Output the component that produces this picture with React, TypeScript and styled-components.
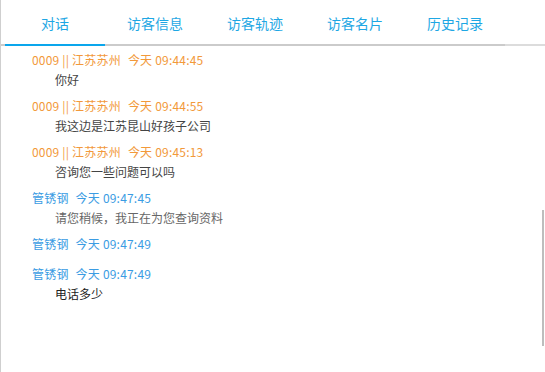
import React from "react";
import styled, { createGlobalStyle } from "styled-components";

const GlobalStyle = createGlobalStyle`
    html, body {
        margin: 0;
        padding: 0;
        background: #fff;
    }
    body {
        font-family: "Noto Sans CJK SC", "Noto Sans", sans-serif;
    }
`

const Wrapper = styled.div`
    position: relative;
    width: 545px;
    height: 372px;
    box-sizing: border-box;
    border-left: 1px solid #cfcfcf;
    overflow: hidden;
`

const TabBar = styled.div`
    display: flex;
    height: 46px;
    box-sizing: border-box;
    border-bottom: 2px solid #dcdcdc;
    margin-left: -1px;
`

const TabTrack = styled.div`
    display: flex;
    width: 505px;
    padding-left: 5px;
    box-sizing: border-box;
    margin-bottom: -2px;
    border-bottom: 2px solid #cbcbcb;
`

const Tab = styled.div<{ $active?: boolean }>`
    width: 100px;
    display: flex;
    align-items: center;
    justify-content: center;
    padding-top: 2px;
    font-size: 14px;
    color: #1ea7e4;
    margin-bottom: -2px;
    border-bottom: 2px solid ${(p) => (p.$active ? "#0aa6ec" : "transparent")};
`

const ChatList = styled.div`
    display: flex;
    flex-direction: column;
    padding: 4px 0 0 31px;
`

const Message = styled.div`
    display: flex;
    flex-direction: column;
    margin-bottom: 6px;
`

const Header = styled.div<{ $guest?: boolean }>`
    display: flex;
    gap: 7px;
    height: 20px;
    line-height: 20px;
    font-size: 12px;
    letter-spacing: 0.2px;
    color: ${(p) => (p.$guest ? "#f2993a" : "#3a9ce3")};
    white-space: pre;
`

const Content = styled.div<{ $tone?: string }>`
    min-height: 4px;
    line-height: 20px;
    padding-left: 23px;
    font-size: 12px;
    color: ${(p) => p.$tone || "#444"};
`

const ScrollThumb = styled.div`
    position: absolute;
    right: 1px;
    top: 210px;
    width: 2px;
    height: 136px;
    background: #bdbdbd;
`

type Msg = { who: string; time: string; text: string; guest?: boolean; tone?: string };

const messages: Msg[] = [
    { who: "0009 || 江苏苏州", time: "今天 09:44:45", text: "你好", guest: true },
    { who: "0009 || 江苏苏州", time: "今天 09:44:55", text: "我这边是江苏昆山好孩子公司", guest: true },
    { who: "0009 || 江苏苏州", time: "今天 09:45:13", text: "咨询您一些问题可以吗", guest: true },
    { who: "管锈钢", time: "今天 09:47:45", text: "请您稍候，我正在为您查询资料", tone: "#666" },
    { who: "管锈钢", time: "今天 09:47:49", text: "" },
    { who: "管锈钢", time: "今天 09:47:49", text: "电话多少", tone: "#222" },
];

const tabs = ["对话", "访客信息", "访客轨迹", "访客名片", "历史记录"];

const App = () => {
    return (
        <Wrapper>
            <GlobalStyle />
            <TabBar>
                <TabTrack>
                    {tabs.map((t, i) => (
                        <Tab key={t} $active={i === 0}>{t}</Tab>
                    ))}
                </TabTrack>
            </TabBar>
            <ChatList>
                {messages.map((m, i) => (
                    <Message key={i}>
                        <Header $guest={m.guest}>
                            <span>{m.who}</span>
                            <span>{m.time}</span>
                        </Header>
                        <Content $tone={m.tone}>{m.text}</Content>
                    </Message>
                ))}
            </ChatList>
            <ScrollThumb />
        </Wrapper>
    );
};

export default App;
